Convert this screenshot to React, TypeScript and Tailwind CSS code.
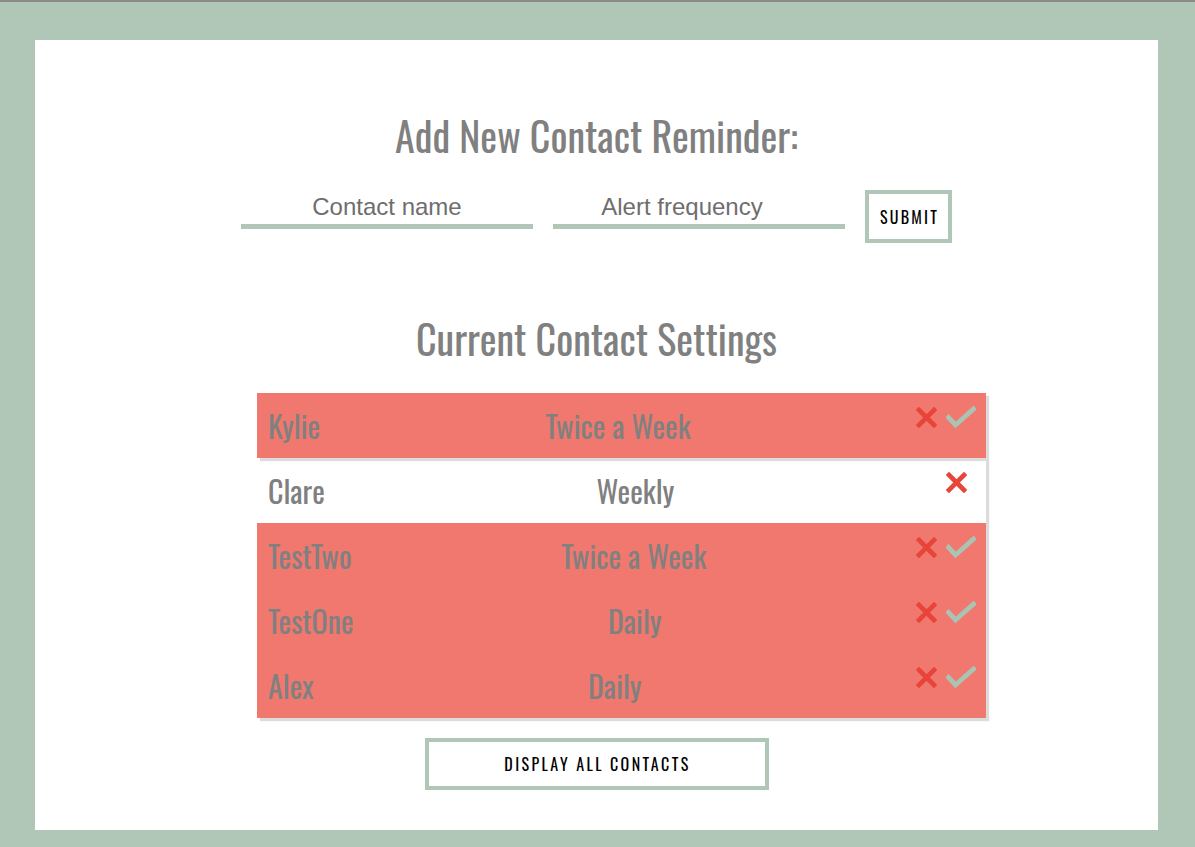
const condensed = {
  fontFamily: '"Oswald", "Liberation Sans Narrow", "DejaVu Sans Condensed", "Roboto Condensed", sans-serif',
};

type Contact = { name: string; frequency: string; pending: boolean };

const contacts: Contact[] = [
  { name: "Kylie", frequency: "Twice a Week", pending: true },
  { name: "Clare", frequency: "Weekly", pending: false },
  { name: "TestTwo", frequency: "Twice a Week", pending: true },
  { name: "TestOne", frequency: "Daily", pending: true },
  { name: "Alex", frequency: "Daily", pending: true },
];

function Cross() {
  return (
    <svg width="21" height="21" viewBox="0 0 21 21" className="shrink-0">
      <path d="M3 3 L18 18 M18 3 L3 18" stroke="#e8443a" strokeWidth="4.6" strokeLinecap="square" fill="none" />
    </svg>
  );
}

function Check() {
  return (
    <svg width="30" height="23" viewBox="0 0 30 23" className="shrink-0">
      <path d="M2.5 11.5 L9.5 19 L27.5 3" stroke="#a9c4b4" strokeWidth="4.8" strokeLinecap="square" strokeLinejoin="miter" fill="none" />
    </svg>
  );
}

function ContactRow({ contact }: { contact: Contact }) {
  return (
    <li
      className={
        contact.pending
          ? "flex h-[65px] items-center justify-between bg-[#f0786e] pl-[11px] pr-[10px] shadow-[3px_3px_1px_#dcdcdc]"
          : "flex h-[65px] items-center justify-between pl-[11px] pr-[10px] shadow-[3px_3px_1px_#dcdcdc]"
      }
    >
      <span className="text-[30px] leading-none text-[#808080]" style={condensed}>
        {contact.name}
      </span>
      <span className="text-[30px] leading-none text-[#808080]" style={condensed}>
        {contact.frequency}
      </span>
      <span className={contact.pending ? "mb-[16px] flex items-center gap-[9px]" : "mb-[16px] flex items-center pr-[9px]"}>
        <Cross />
        {contact.pending && <Check />}
      </span>
    </li>
  );
}

export default function App() {
  return (
    <div className="h-[847px] w-full overflow-hidden border-t-2 border-[#8a8a8a] bg-[#b0c7b7] pl-[35px] pr-[37px] pt-[38px]">
      <div className="flex h-[790px] flex-col items-center bg-white pt-[71px]">
        <h1 className="text-[40px] leading-[48px] text-[#808080]" style={condensed}>
          Add New Contact Reminder:
        </h1>

        <form className="mt-[31px] flex items-start gap-[20px]" onSubmit={(e) => e.preventDefault()}>
          <input
            placeholder="Contact name"
            className="h-[39px] w-[292px] border-b-[5px] border-[#b0c7b7] bg-transparent text-center text-[24px] outline-none placeholder:text-[#6e6e6e]"
            style={{ fontFamily: '"Liberation Sans", Arial, sans-serif' }}
          />
          <input
            placeholder="Alert frequency"
            className="h-[39px] w-[292px] border-b-[5px] border-[#b0c7b7] bg-transparent pr-[34px] text-center text-[24px] outline-none placeholder:text-[#6e6e6e]"
            style={{ fontFamily: '"Liberation Sans", Arial, sans-serif' }}
          />
          <button
            type="submit"
            className="flex h-[53px] w-[87px] items-center justify-center border-4 border-[#b0c7b7] bg-white pl-[2px] text-[16px] tracking-[2.2px] text-black"
            style={condensed}
          >
            SUBMIT
          </button>
        </form>

        <h2 className="mt-[71px] text-[40px] leading-[48px] text-[#808080]" style={condensed}>
          Current Contact Settings
        </h2>

        <ul className="ml-[50px] mt-[31px] w-[729px]">
          {contacts.map((c) => (
            <ContactRow key={c.name} contact={c} />
          ))}
        </ul>

        <button
          type="button"
          className="mt-[20px] flex h-[52px] w-[344px] items-center justify-center border-4 border-[#b0c7b7] bg-white pl-[2px] text-[16px] tracking-[2.4px] text-black"
          style={condensed}
        >
          DISPLAY ALL CONTACTS
        </button>
      </div>
    </div>
  );
}
